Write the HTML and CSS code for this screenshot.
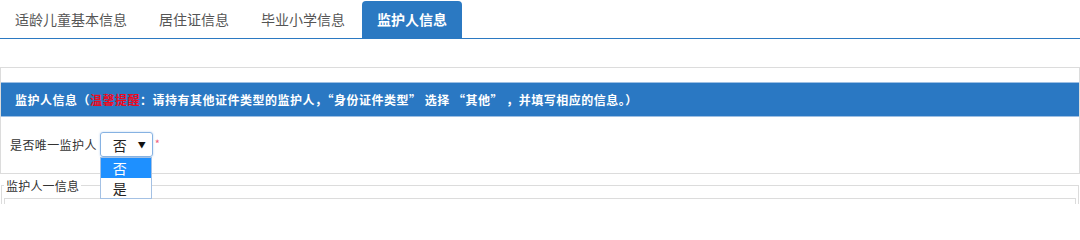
FILE: index.html
```html
<!DOCTYPE html>
<html lang="zh-CN">
<head>
<meta charset="utf-8">
<title>监护人信息</title>
<link rel="stylesheet" href="styles.css">
</head>
<body>
<ul class="tabs">
  <li class="tab">适龄儿童基本信息</li>
  <li class="tab">居住证信息</li>
  <li class="tab">毕业小学信息</li>
  <li class="tab active">监护人信息</li>
</ul>

<div class="panel">
  <div class="panel-head">监护人信息（<span class="warn">温馨提醒</span>：请持有其他证件类型的监护人，“身份证件类型” 选择 “其他” ，并填写相应的信息。）</div>
  <div class="row">
    <span class="label">是否唯一监护人</span>
    <div class="select-wrap">
      <div class="select"><span>否</span><span class="arrow">▼</span></div>
      <ul class="options">
        <li class="opt selected">否</li>
        <li class="opt">是</li>
      </ul>
    </div>
    <span class="req">*</span>
  </div>
</div>

<fieldset class="group">
  <legend>监护人一信息</legend>
  <div class="inner"></div>
</fieldset>
</body>
</html>
```

FILE: styles.css
```css
html, body {
  margin: 0;
  padding: 0;
  background: #fff;
  font-family: "Noto Sans CJK SC", "Microsoft YaHei", sans-serif;
  color: #333;
}

html {
  height: 204px;
  overflow: hidden;
}

body {
  height: 204px;
  overflow: hidden;
}

.tabs {
  list-style: none;
  margin: 0;
  padding: 0;
  display: flex;
  height: 38px;
  border-bottom: 1px solid #2b79c2;
}

.tab {
  height: 37px;
  line-height: 37px;
  margin-top: 1px;
  padding: 0 15px;
  font-size: 14px;
  color: #555;
  margin-right: 2px;
}

.tab.active {
  background: #2b79c2;
  color: #fff;
  font-weight: bold;
  border-radius: 4px 4px 0 0;
}

.panel {
  margin-top: 28px;
  border: 1px solid #dcdcdc;
  padding-top: 14px;
  height: 91px;
  box-sizing: content-box;
}

.panel-head {
  height: 33px;
  line-height: 33px;
  background: #2a78c3;
  border-top: 1px solid #9dbfe3;
  border-bottom: 1px solid #9dbfe3;
  color: #fff;
  font-size: 12px;
  letter-spacing: 0.5px;
  font-weight: bold;
  padding-left: 14px;
  white-space: nowrap;
}

.warn {
  color: #ee0a1e;
}

.row {
  display: flex;
  align-items: center;
  padding: 15px 0 0 9px;
  height: 25px;
}

.label {
  font-size: 12px;
  letter-spacing: 0.4px;
  color: #333;
  margin-right: 3px;
}

.select-wrap {
  position: relative;
}

.select {
  width: 33px;
  height: 23px;
  border: 1px solid #86b2e2;
  border-radius: 3px;
  box-shadow: 0 0 2px rgba(100, 160, 230, 0.5);
  display: flex;
  align-items: center;
  justify-content: space-between;
  padding: 0 6px 0 12px;
  box-sizing: content-box;
  font-size: 14px;
  color: #222;
}

.arrow {
  font-size: 8px;
  color: #111;
}

.options {
  position: absolute;
  left: 0;
  top: 25px;
  list-style: none;
  margin: 0;
  padding: 0;
  width: 50px;
  border: 1px solid #a4c1e4;
  background: #fff;
  z-index: 2;
}

.opt {
  height: 20px;
  line-height: 20px;
  padding-left: 12px;
  font-size: 14px;
  color: #222;
}

.opt.selected {
  background: #1e90ff;
  color: #fff;
}

.req {
  color: #f06080;
  font-size: 11px;
  align-self: flex-start;
  margin-left: 2px;
  margin-top: 3px;
}

.group {
  margin: 3px 1px 0 1px;
  border: 1px solid #dcdcdc;
  padding: 0 2px;
  min-width: 0;
}

.group legend {
  padding: 0 2px;
  font-size: 12px;
  letter-spacing: 0.2px;
  color: #333;
  margin-left: 0;
}

.inner {
  margin-top: 4px;
  height: 40px;
  border: 1px solid #dcdcdc;
}
```
